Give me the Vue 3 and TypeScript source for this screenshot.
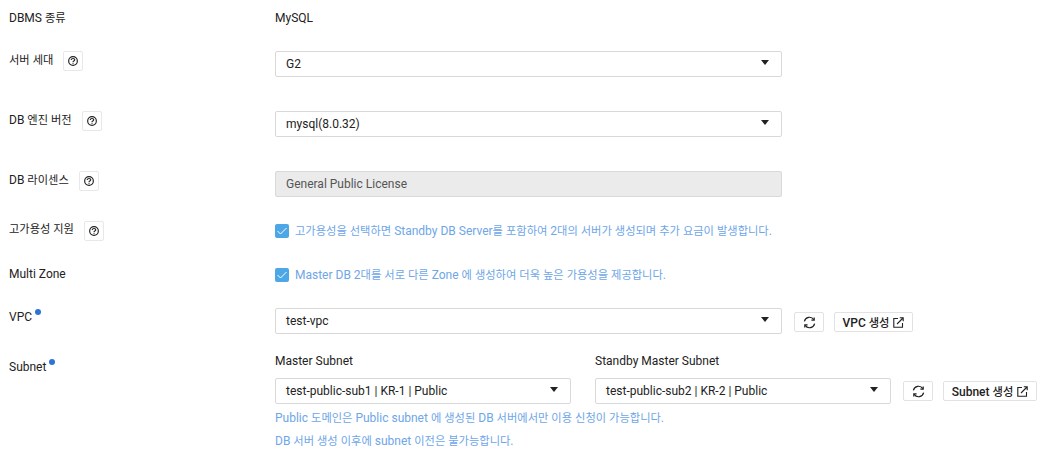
<template>
  <div class="form">
    <div class="row row-dbms">
      <div class="label"><span><span v-for="(s, i) in segs('DBMS 종류')" :key="i" :class="{ ko: s.ko }">{{ s.text }}</span></span></div>
      <div class="value">MySQL</div>
    </div>

    <div v-for="item in selectRows" :key="item.label" class="row" :class="item.cls">
      <div class="label">
        <span><span v-for="(s, i) in segs(item.label)" :key="i" :class="{ ko: s.ko }">{{ s.text }}</span></span>
        <button class="help" type="button">
          <svg width="10" height="10" viewBox="0 0 12 12" fill="none" stroke="#222" stroke-width="1.4">
            <circle cx="6" cy="6" r="5.2" />
            <path d="M3.9 4.8c0-1.2 1-1.8 2.1-1.8s2.1.6 2.1 1.6c0 1.3-2.1 1.4-2.1 2.6" />
            <path d="M6 8v1.3" />
          </svg>
        </button>
      </div>
      <div class="select wide" :class="{ disabled: item.disabled }">
        <span>{{ item.value }}</span>
        <i v-if="!item.disabled" class="caret"></i>
      </div>
    </div>

    <div class="row row-ha">
      <div class="label">
        <span class="ko">고가용성 지원</span>
        <button class="help" type="button">
          <svg width="10" height="10" viewBox="0 0 12 12" fill="none" stroke="#222" stroke-width="1.4">
            <circle cx="6" cy="6" r="5.2" />
            <path d="M3.9 4.8c0-1.2 1-1.8 2.1-1.8s2.1.6 2.1 1.6c0 1.3-2.1 1.4-2.1 2.6" />
            <path d="M6 8v1.3" />
          </svg>
        </button>
      </div>
      <label class="check">
        <span class="box">
          <svg width="14" height="14" viewBox="0 0 14 14" fill="none" stroke="#fff" stroke-width="1">
            <path d="M2.5 7l3 3 6-6" />
          </svg>
        </span>
        <span><span v-for="(s, i) in segs(haText)" :key="i" :class="{ ko: s.ko }">{{ s.text }}</span></span>
      </label>
    </div>

    <div class="row row-zone">
      <div class="label">Multi Zone</div>
      <label class="check">
        <span class="box">
          <svg width="14" height="14" viewBox="0 0 14 14" fill="none" stroke="#fff" stroke-width="1">
            <path d="M2.5 7l3 3 6-6" />
          </svg>
        </span>
        <span><span v-for="(s, i) in segs(zoneText)" :key="i" :class="{ ko: s.ko }">{{ s.text }}</span></span>
      </label>
    </div>

    <div class="row row-vpc">
      <div class="label">VPC<i class="dot"></i></div>
      <div class="select wide">
        <span>test-vpc</span>
        <i class="caret"></i>
      </div>
      <button class="btn refresh" type="button">
        <svg width="13" height="13" viewBox="0 0 13 13" fill="none" stroke="#222" stroke-width="1.2">
          <path d="M1.4 5.4A5.2 5.2 0 0 1 10.8 3.6" />
          <path d="M11.6 7.6A5.2 5.2 0 0 1 2.2 9.4" />
          <path d="M11.2 1.4v2.8H8.4" />
          <path d="M1.8 11.6V8.8h2.8" />
        </svg>
      </button>
      <button class="btn create" type="button">
        <span>VPC <span class="ko">생성</span></span>
        <svg width="11" height="11" viewBox="0 0 11 11" fill="none" stroke="#222" stroke-width="1.1">
          <path d="M5 1.5H.8v8.7h8.7V6" />
          <path d="M4 7l6-6M6.8.8h3.4v3.4" />
        </svg>
      </button>
    </div>

    <div class="row row-subnet">
      <div class="label">Subnet<i class="dot"></i></div>
      <div class="subnet-body">
        <div class="subnet-cols">
          <div class="subnet-col">
            <div class="sub-title">Master Subnet</div>
            <div class="select narrow">
              <span>test-public-sub1 | KR-1 | Public</span>
              <i class="caret"></i>
            </div>
          </div>
          <div class="subnet-col">
            <div class="sub-title">Standby Master Subnet</div>
            <div class="subnet-line">
              <div class="select narrow">
                <span>test-public-sub2 | KR-2 | Public</span>
                <i class="caret"></i>
              </div>
              <button class="btn refresh" type="button">
                <svg width="13" height="13" viewBox="0 0 13 13" fill="none" stroke="#222" stroke-width="1.2">
                  <path d="M1.4 5.4A5.2 5.2 0 0 1 10.8 3.6" />
                  <path d="M11.6 7.6A5.2 5.2 0 0 1 2.2 9.4" />
                  <path d="M11.2 1.4v2.8H8.4" />
                  <path d="M1.8 11.6V8.8h2.8" />
                </svg>
              </button>
              <button class="btn create" type="button">
                <span>Subnet <span class="ko">생성</span></span>
                <svg width="11" height="11" viewBox="0 0 11 11" fill="none" stroke="#222" stroke-width="1.1">
                  <path d="M5 1.5H.8v8.7h8.7V6" />
                  <path d="M4 7l6-6M6.8.8h3.4v3.4" />
                </svg>
              </button>
            </div>
          </div>
        </div>
        <p class="note first"><span v-for="(s, i) in segs(noteOne)" :key="i" :class="{ ko: s.ko }">{{ s.text }}</span></p>
        <p class="note"><span v-for="(s, i) in segs(noteTwo)" :key="i" :class="{ ko: s.ko }">{{ s.text }}</span></p>
      </div>
    </div>
  </div>
</template>

<script setup lang="ts">
interface SelectRow {
  label: string;
  value: string;
  cls: string;
  disabled?: boolean;
}

const selectRows: SelectRow[] = [
  { label: '서버 세대', value: 'G2', cls: 'row-select' },
  { label: 'DB 엔진 버전', value: 'mysql(8.0.32)', cls: 'row-select' },
  { label: 'DB 라이센스', value: 'General Public License', cls: 'row-select row-last', disabled: true },
];

const haText = '고가용성을 선택하면 Standby DB Server를 포함하여 2대의 서버가 생성되며 추가 요금이 발생합니다.';
const zoneText = 'Master DB 2대를 서로 다른 Zone 에 생성하여 더욱 높은 가용성을 제공합니다.';
const noteOne = 'Public 도메인은 Public subnet 에 생성된 DB 서버에서만 이용 신청이 가능합니다.';
const noteTwo = 'DB 서버 생성 이후에 subnet 이전은 불가능합니다.';

// hangul runs are set a bit smaller than the latin text
const segs = (text: string) =>
  text
    .split(/([\uac00-\ud7a3]+)/)
    .filter((part) => part !== '')
    .map((part) => ({ text: part, ko: /[\uac00-\ud7a3]/.test(part) }));
</script>

<style>
body {
  background: #fff;
}
</style>

<style scoped>
.form {
  width: 1046px;
  height: 453px;
  overflow: hidden;
  font-family: Roboto, 'Noto Sans CJK KR', sans-serif;
  font-size: 12px;
  color: #222;
  box-sizing: border-box;
  padding-top: 10px;
}

.ko {
  font-size: 11.26px;
}

.row {
  display: flex;
  align-items: flex-start;
}

.label {
  width: 266px;
  margin-left: 9px;
  flex: none;
  display: flex;
  align-items: flex-start;
  line-height: 16px;
}

.row-dbms {
  height: 41px;
  line-height: 16px;
}

.row-select {
  height: 60px;
}

.row-last {
  height: 50px;
}

.row-select .label {
  padding-top: 1px;
}

.help {
  width: 20px;
  height: 20px;
  margin-left: 10px;
  margin-top: -1px;
  padding: 0;
  border: 1px solid #e8e8e8;
  border-radius: 2px;
  background: #fff;
  display: flex;
  align-items: center;
  justify-content: center;
}

.select {
  height: 26px;
  box-sizing: border-box;
  border: 1px solid #d9d9d9;
  border-radius: 2px;
  background: #fff;
  padding: 0 12px 0 10px;
  display: flex;
  align-items: center;
  justify-content: space-between;
  line-height: 24px;
  flex: none;
}

.select.wide {
  width: 507px;
}

.select.narrow {
  width: 296px;
}

.select.disabled {
  background: #ebebeb;
  color: #555;
}

.caret {
  width: 0;
  height: 0;
  margin-top: -3px;
  border-left: 4.5px solid transparent;
  border-right: 4.5px solid transparent;
  border-top: 5px solid #222;
}

.row-ha {
  height: 44px;
}

.row-ha .label {
  padding-top: 1px;
}

.row-zone {
  height: 43px;
}

.row-zone .label {
  padding-top: 1px;
}

.check {
  display: flex;
  align-items: center;
  color: #6ea6e8;
  height: 14px;
  margin-top: 3px;
  line-height: 14px;
}

.box {
  width: 14px;
  height: 14px;
  margin-right: 6px;
  border-radius: 2px;
  background: #4da6e6;
  display: flex;
  flex: none;
}

.dot {
  width: 6px;
  height: 6px;
  border-radius: 50%;
  background: #2f73d6;
  margin: 0 0 0 3px;
}

.row-vpc {
  height: 45px;
}

.row-vpc .label {
  padding-top: 1px;
}

.row-subnet .label {
  padding-top: 6px;
}

.btn {
  height: 20px;
  margin-top: 4px;
  padding: 0;
  border: 1px solid #e2e2e2;
  border-radius: 2px;
  background: #fff;
  font: inherit;
  font-weight: 500;
  color: #222;
  display: flex;
  align-items: center;
  justify-content: center;
  gap: 4px;
  flex: none;
  box-sizing: border-box;
}

.refresh {
  width: 30px;
  margin-left: 12px;
}

.create {
  margin-left: 10px;
  width: 79px;
}

.subnet-line .btn {
  margin-top: 3px;
}

.subnet-line .create {
  width: 94px;
}

.subnet-cols {
  display: flex;
  gap: 24px;
}

.sub-title {
  line-height: 16px;
  margin-bottom: 9px;
}

.subnet-line {
  display: flex;
}

.note {
  margin: 6px 0 0;
  color: #6ea6e8;
  line-height: 16px;
}
</style>
